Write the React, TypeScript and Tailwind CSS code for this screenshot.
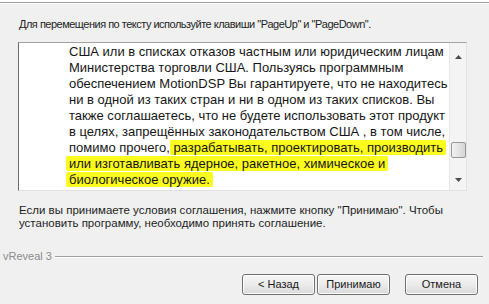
import React from 'react';

const uiFont = { fontFamily: '"Liberation Sans", Arial, sans-serif' };
const textFont = { fontFamily: '"Liberation Sans", Arial, sans-serif' };

const lines: { plain?: string; mark?: string }[] = [
	{ plain: 'США или в списках отказов частным или юридическим лицам' },
	{ plain: 'Министерства торговли США. Пользуясь программным' },
	{ plain: 'обеспечением MotionDSP Вы гарантируете, что не находитесь' },
	{ plain: 'ни в одной из таких стран и ни в одном из таких списков. Вы' },
	{ plain: 'также соглашаетесь, что не будете использовать этот продукт' },
	{ plain: 'в целях, запрещённых законодательством США , в том числе,' },
	{ plain: 'помимо прочего, ', mark: 'разрабатывать, проектировать, производить' },
	{ mark: 'или изготавливать ядерное, ракетное, химическое и' },
	{ mark: 'биологическое оружие.' }
];

const WinButton = ({ label }: { label: string }) => (
	<button
		className="w-[73px] h-[21px] rounded-[3px] border border-[#707070] bg-gradient-to-b from-[#f6f6f6] via-[#ebebeb] to-[#d9d9d9] text-[11px] text-[#1a1a1a] leading-none shadow-[inset_0_0_0_1px_#fcfcfc]"
		style={uiFont}
	>
		{label}
	</button>
);

export default function App() {
	return (
		<div className="w-[489px] h-[304px] bg-[#f0f0f0] flex flex-col overflow-hidden text-black" style={uiFont}>
			<div className="h-[2px] bg-white" />
			<div className="h-px bg-[#a0a0a0]" />
			<div className="h-px bg-white" />

			<div className="mt-[14px] pl-[19px] text-[11px] leading-[13px] tracking-[-0.5px] text-[#1e1e1e]">
				Для перемещения по тексту используйте клавиши "PageUp" и "PageDown".
			</div>

			<div className="mt-[11px] ml-[18px] w-[449px] h-[149px] flex border-t border-l border-t-[#a3a3a3] border-l-[#6d6d6d] border-r border-b border-r-[#e2e2e2] border-b-[#e2e2e2] bg-white">
				<div className="flex-1 pt-px pl-[50px] overflow-hidden text-[13px] leading-[16px] text-[#161616]" style={textFont}>
					{lines.map((l, i) => (
						<div key={i} className="whitespace-nowrap">
							{l.plain}
							{l.mark && <span className="bg-[#fbfb1e] -mx-[3px] px-[3px] rounded-[2px]">{l.mark}</span>}
						</div>
					))}
				</div>
				<div className="w-[17px] bg-[#f4f4f4] border-l border-[#e8e8e8] flex flex-col items-center">
					<svg width="7" height="4" viewBox="0 0 7 4" className="mt-[12px]">
						<path d="M0 4 L3.5 0 L7 4 Z" fill="#4d4d4d" />
					</svg>
					<div className="mt-[83px] w-[15px] h-[16px] rounded-[2px] border border-[#979797] bg-gradient-to-r from-[#f2f2f2] to-[#d6d6d6]" />
					<svg width="7" height="4" viewBox="0 0 7 4" className="mt-[20px]">
						<path d="M0 0 L3.5 4 L7 0 Z" fill="#4d4d4d" />
					</svg>
				</div>
			</div>

			<div className="mt-[13px] pl-[19px] text-[11.5px] leading-[13px] text-[#1e1e1e]">
				<div>Если вы принимаете условия соглашения, нажмите кнопку "Принимаю". Чтобы</div>
				<div>установить программу, необходимо принять соглашение.</div>
			</div>

			<div className="mt-[20px] pl-[3px] pr-[6px] flex items-center gap-[3px]">
				<span className="text-[11px] leading-[13px] text-[#8c8c8c]">vReveal 3</span>
				<div className="flex-1 flex flex-col">
					<div className="h-px bg-[#a0a0a0]" />
					<div className="h-px bg-white" />
				</div>
			</div>

			<div className="mt-[11px] pr-[11px] flex justify-end">
				<WinButton label="< Назад" />
				<div className="w-[2px]" />
				<WinButton label="Принимаю" />
				<div className="w-[15px]" />
				<WinButton label="Отмена" />
			</div>
		</div>
	);
}
